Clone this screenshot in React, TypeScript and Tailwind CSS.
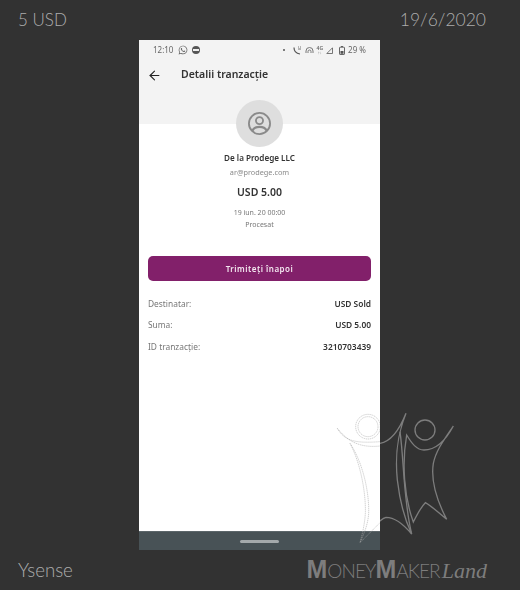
import { ArrowLeft } from 'lucide-react';
import { FaWhatsapp } from 'react-icons/fa';

const ROWS = [
  { label: 'Destinatar:', value: 'USD Sold' },
  { label: 'Suma:', value: 'USD 5.00' },
  { label: 'ID tranzacție:', value: '3210703439' },
];

const HEADLINE = { fontFamily: 'Lato, sans-serif' };
const PHONE_FONT = { fontFamily: '"Noto Sans", sans-serif' };

function StatusBar() {
  return (
    <div className="flex h-[20px] items-center justify-between px-[14px] text-[8px] text-[#666]">
      <div className="flex items-center gap-[4px]">
        <span className="mr-[1px]">12:10</span>
        <FaWhatsapp size={10} />
        <span className="flex h-[8px] w-[8px] items-center justify-center rounded-full bg-[#555]">
          <span className="h-[2px] w-[6px] bg-[#eee]" />
        </span>
      </div>
      <div className="flex items-center gap-[3px]">
        <span className="mr-[5px] h-[2px] w-[2px] rounded-full bg-[#555]" />
        <svg width="9" height="9" viewBox="0 0 9 9" fill="none" stroke="#555" strokeWidth="1.2">
          <path d="M1 1.5c0 3.5 2.5 6 6 6.5" />
          <path d="M5 1h1M7 1h1M5 3h3" strokeWidth="0.8" />
        </svg>
        <svg width="9" height="9" viewBox="0 0 9 9" fill="none" stroke="#777" strokeWidth="1">
          <path d="M1 7V5a3.5 3.5 0 0 1 7 0v2" />
          <path d="M3 7V5.5a1.5 1.5 0 0 1 3 0V7" />
        </svg>
        <span className="flex flex-col items-center text-[5px] leading-[5px] font-semibold">
          4G
          <span className="text-[4px] leading-[3px]">↑↓</span>
        </span>
        <svg width="7" height="7" viewBox="0 0 7 7" fill="none" stroke="#555" strokeWidth="0.8">
          <path d="M6.5 0.8V6.5H0.8Z" />
        </svg>
        <svg className="ml-[3px]" width="6" height="9" viewBox="0 0 6 9" fill="none" stroke="#555" strokeWidth="0.9">
          <rect x="0.5" y="1.2" width="5" height="7.3" rx="0.6" />
          <rect x="1.5" y="5" width="3" height="2.8" fill="#555" stroke="none" />
          <path d="M2 0.5h2" />
        </svg>
        <span>29 %</span>
      </div>
    </div>
  );
}

function Logo() {
  return (
    <svg className="absolute top-[400px] left-[300px]" width="200" height="190" viewBox="0 0 600 570" fill="none">
      <defs>
        <clipPath id="onWhite">
          <rect x="0" y="0" width="240" height="570" />
        </clipPath>
        <clipPath id="onDark">
          <rect x="240" y="0" width="360" height="570" />
        </clipPath>
      </defs>
      <g clipPath="url(#onWhite)" stroke="#a8a8a8" strokeWidth="1.6" strokeDasharray="4 2">
        <circle cx="204" cy="80" r="37" />
        <circle cx="204" cy="80" r="30" />
        <path d="M112 85C140 120 175 145 240 138" />
        <path d="M112 85C135 125 170 130 240 125" />
        <path d="M150 130C190 190 208 280 206 340C204 375 190 405 180 428L240 368" />
        <path d="M150 130C182 190 198 280 196 340C194 375 186 405 180 428" />
      </g>
      <g clipPath="url(#onDark)" stroke="#7d7d7d" strokeWidth="4">
        <path d="M240 130C275 125 300 85 318 40C290 110 285 170 292 240C300 310 315 360 335 402C310 372 285 352 258 352C248 354 240 362 230 372" />
        <path d="M300 95C312 180 310 300 335 402" />
        <circle cx="375" cy="90" r="30" />
        <path d="M460 78C435 125 405 150 372 150C350 150 335 130 320 105C305 190 312 290 340 366C352 342 362 322 376 308C395 318 420 342 440 358C410 300 392 240 400 190C408 150 435 115 460 78Z" />
      </g>
    </svg>
  );
}

function AvatarIcon() {
  return (
    <svg width="25" height="25" viewBox="0 0 26 26" fill="none" stroke="#8a8a8a" strokeWidth="1.9">
      <circle cx="13" cy="13" r="11" />
      <circle cx="13" cy="10" r="3.7" />
      <path d="M5.5 20.5C7 17.5 10 16.5 13 16.5S19 17.5 20.5 20.5" strokeWidth="2.4" />
    </svg>
  );
}

export default function App() {
  return (
    <div className="relative flex h-[590px] w-[520px] flex-col overflow-hidden bg-[#323232]">
      <div className="flex h-[40px] items-center justify-between pr-[34px] pl-[18px] font-light text-[#adadad]" style={HEADLINE}>
        <span className="text-[17px]">5 USD</span>
        <span className="text-[17.5px]">19/6/2020</span>
      </div>

      <div className="ml-[139px] flex h-[510px] w-[241px] flex-col bg-white blur-[0.3px]" style={PHONE_FONT}>
        <div className="h-[84px] bg-[#f3f3f3]">
          <StatusBar />
          <div className="flex h-[30px] items-center pl-[8px]">
            <ArrowLeft size={15} strokeWidth={1.75} className="text-[#222]" />
            <span className="ml-[19px] text-[10.5px] font-semibold text-[#333]">Detalii tranzacție</span>
          </div>
        </div>

        <div className="-mt-[24px] flex flex-col items-center">
          <div className="flex h-[47px] w-[47px] items-center justify-center rounded-full bg-[#dedede]">
            <AvatarIcon />
          </div>
          <div className="mt-[5px] text-[8.1px] leading-[12px] font-semibold text-[#333]">De la Prodege LLC</div>
          <div className="mt-[2px] text-[7.3px] leading-[12px] text-[#8a8a8a]">ar@prodege.com</div>
          <div className="mt-[7px] text-[10.5px] leading-[14px] font-semibold text-[#333]">USD 5.00</div>
          <div className="mt-[9px] text-[7px] leading-[10px] text-[#777]">19 iun. 20 00:00</div>
          <div className="mt-[2px] text-[7px] leading-[10px] text-[#777]">Procesat</div>
        </div>

        <div className="mx-[9px] mt-[26px] flex h-[25px] items-center justify-center rounded-[5px] bg-[#82206a] text-[8px] font-semibold tracking-[0.5px] text-[#f3e6ef]">
          Trimiteți înapoi
        </div>

        <div className="mx-[9px] mt-[17px] flex flex-col gap-[9.5px]">
          {ROWS.map((row) => (
            <div key={row.label} className="flex h-[12px] items-center justify-between text-[8.4px]">
              <span className="text-[#777]">{row.label}</span>
              <span className="font-semibold text-[#333]">{row.value}</span>
            </div>
          ))}
        </div>

        <div className="mt-auto flex h-[19px] items-center justify-center border-t border-[#5c666a] bg-[#485256]">
          <span className="h-[3px] w-[39px] rounded-full bg-[#a4a9ab]" />
        </div>
      </div>

      <div className="flex h-[40px] items-center justify-between pr-[33px] pl-[18px]">
        <span className="text-[18.7px] font-light text-[#adadad]" style={HEADLINE}>Ysense</span>
        <span className="flex items-baseline text-[#7d7d7d]" style={HEADLINE}>
          <span className="text-[25px] leading-[30px] font-bold" style={{ fontFamily: '"Liberation Sans", sans-serif' }}>M</span>
          <span className="text-[19px] leading-[30px] font-light tracking-[-0.9px]">ONEY</span>
          <span className="text-[25px] leading-[30px] font-bold" style={{ fontFamily: '"Liberation Sans", sans-serif' }}>M</span>
          <span className="text-[19px] leading-[30px] font-light tracking-[-0.9px]">AKER</span>
          <span className="ml-[2px] text-[22px] leading-[30px] italic" style={{ fontFamily: '"Liberation Serif", serif' }}>Land</span>
        </span>
      </div>

      <Logo />
    </div>
  );
}
